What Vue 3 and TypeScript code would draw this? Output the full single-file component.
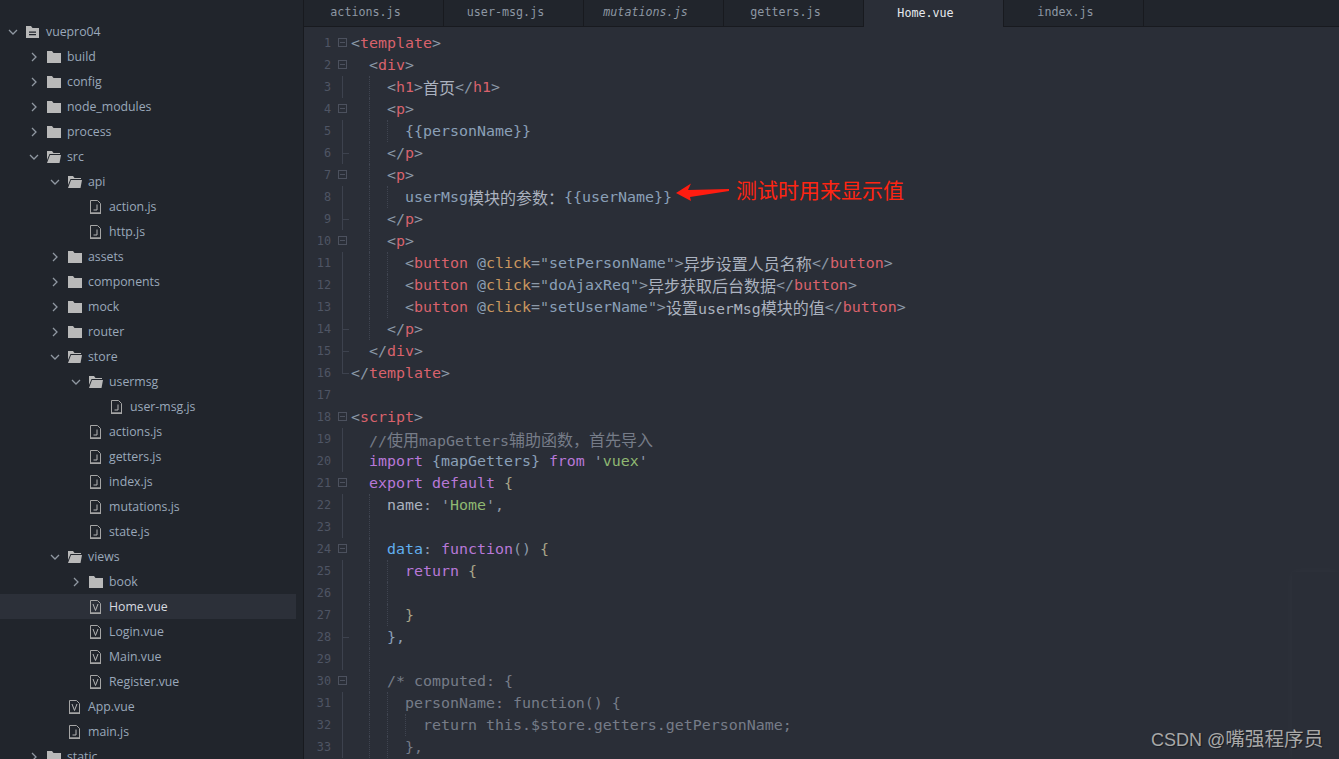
<script setup lang="ts">
type Tok = [string, string]
interface Line { indent: number; fold: string; toks: Tok[] }
interface Node { name: string; depth: number; kind: 'root' | 'closed' | 'open' | 'js' | 'vue'; active?: boolean }

const tabs = [
  { name: 'actions.js' },
  { name: 'user-msg.js' },
  { name: 'mutations.js', italic: true },
  { name: 'getters.js' },
  { name: 'Home.vue', active: true },
  { name: 'index.js' },
]

const tree: Node[] = [
  { name: 'vuepro04', depth: 0, kind: 'root' },
  { name: 'build', depth: 1, kind: 'closed' },
  { name: 'config', depth: 1, kind: 'closed' },
  { name: 'node_modules', depth: 1, kind: 'closed' },
  { name: 'process', depth: 1, kind: 'closed' },
  { name: 'src', depth: 1, kind: 'open' },
  { name: 'api', depth: 2, kind: 'open' },
  { name: 'action.js', depth: 3, kind: 'js' },
  { name: 'http.js', depth: 3, kind: 'js' },
  { name: 'assets', depth: 2, kind: 'closed' },
  { name: 'components', depth: 2, kind: 'closed' },
  { name: 'mock', depth: 2, kind: 'closed' },
  { name: 'router', depth: 2, kind: 'closed' },
  { name: 'store', depth: 2, kind: 'open' },
  { name: 'usermsg', depth: 3, kind: 'open' },
  { name: 'user-msg.js', depth: 4, kind: 'js' },
  { name: 'actions.js', depth: 3, kind: 'js' },
  { name: 'getters.js', depth: 3, kind: 'js' },
  { name: 'index.js', depth: 3, kind: 'js' },
  { name: 'mutations.js', depth: 3, kind: 'js' },
  { name: 'state.js', depth: 3, kind: 'js' },
  { name: 'views', depth: 2, kind: 'open' },
  { name: 'book', depth: 3, kind: 'closed' },
  { name: 'Home.vue', depth: 3, kind: 'vue', active: true },
  { name: 'Login.vue', depth: 3, kind: 'vue' },
  { name: 'Main.vue', depth: 3, kind: 'vue' },
  { name: 'Register.vue', depth: 3, kind: 'vue' },
  { name: 'App.vue', depth: 2, kind: 'vue' },
  { name: 'main.js', depth: 2, kind: 'js' },
  { name: 'static', depth: 1, kind: 'closed' },
]

const btn = (fn: string, label: Tok[]): Tok[] => [
  ['p', '<'], ['t', 'button'], ['x', ' @'], ['a', 'click'], ['p', '="'], ['x', fn], ['p', '">'],
  ...label,
  ['p', '</'], ['t', 'button'], ['p', '>'],
]

const lines: Line[] = [
  { indent: 0, fold: 'box', toks: [['p', '<'], ['t', 'template'], ['p', '>']] },
  { indent: 1, fold: 'box', toks: [['p', '<'], ['t', 'div'], ['p', '>']] },
  { indent: 2, fold: 'bar', toks: [['p', '<'], ['t', 'h1'], ['p', '>'], ['w', '首页'], ['p', '</'], ['t', 'h1'], ['p', '>']] },
  { indent: 2, fold: 'box', toks: [['p', '<'], ['t', 'p'], ['p', '>']] },
  { indent: 3, fold: 'bar', toks: [['x', '{{personName}}']] },
  { indent: 2, fold: 'tee', toks: [['p', '</'], ['t', 'p'], ['p', '>']] },
  { indent: 2, fold: 'box', toks: [['p', '<'], ['t', 'p'], ['p', '>']] },
  { indent: 3, fold: 'bar', toks: [['x', 'userMsg'], ['w', '模块的参数：'], ['x', '{{userName}}']] },
  { indent: 2, fold: 'tee', toks: [['p', '</'], ['t', 'p'], ['p', '>']] },
  { indent: 2, fold: 'box', toks: [['p', '<'], ['t', 'p'], ['p', '>']] },
  { indent: 3, fold: 'bar', toks: btn('setPersonName', [['w', '异步设置人员名称']]) },
  { indent: 3, fold: 'bar', toks: btn('doAjaxReq', [['w', '异步获取后台数据']]) },
  { indent: 3, fold: 'bar', toks: btn('setUserName', [['w', '设置userMsg模块的值']]) },
  { indent: 2, fold: 'tee', toks: [['p', '</'], ['t', 'p'], ['p', '>']] },
  { indent: 1, fold: 'tee', toks: [['p', '</'], ['t', 'div'], ['p', '>']] },
  { indent: 0, fold: 'end', toks: [['p', '</'], ['t', 'template'], ['p', '>']] },
  { indent: 0, fold: '', toks: [] },
  { indent: 0, fold: 'box', toks: [['p', '<'], ['t', 'script'], ['p', '>']] },
  { indent: 1, fold: 'bar', toks: [['m', '//使用mapGetters辅助函数，首先导入']] },
  { indent: 1, fold: 'bar', toks: [['k', 'import'], ['x', ' {mapGetters} '], ['k', 'from'], ['x', ' '], ['p', "'"], ['s', 'vuex'], ['p', "'"]] },
  { indent: 1, fold: 'box', toks: [['k', 'export default'], ['x', ' '], ['y', '{']] },
  { indent: 2, fold: 'bar', toks: [['w', 'name'], ['p', ': '], ['p', "'"], ['s', 'Home'], ['p', "',"]] },
  { indent: 2, fold: 'bar', toks: [] },
  { indent: 2, fold: 'box', toks: [['f', 'data'], ['p', ': '], ['k', 'function'], ['p', '() '], ['y', '{']] },
  { indent: 3, fold: 'bar', toks: [['k', 'return'], ['x', ' '], ['y', '{']] },
  { indent: 3, fold: 'bar', toks: [] },
  { indent: 3, fold: 'bar', toks: [['y', '}']] },
  { indent: 2, fold: 'tee', toks: [['x', '},']] },
  { indent: 2, fold: 'bar', toks: [] },
  { indent: 2, fold: 'box', toks: [['m', '/* computed: {']] },
  { indent: 3, fold: 'bar', toks: [['m', 'personName: function() {']] },
  { indent: 4, fold: 'bar', toks: [['m', 'return this.$store.getters.getPersonName;']] },
  { indent: 3, fold: 'bar', toks: [['m', '},']] },
]

const CJK = /([\u4e00-\u9fff\uff0c\uff1a]+)/
const parts = (text: string) =>
  text.split(CJK).filter(Boolean).map((s) => ({ s, cjk: CJK.test(s) }))
</script>

<template>
  <div class="app">
    <aside class="side">
      <div
        v-for="n in tree"
        :key="n.name + n.depth"
        class="row"
        :class="{ active: n.active }"
        :style="{ paddingLeft: 6 + n.depth * 21 + 'px' }"
      >
        <span class="chev">
          <svg v-if="n.kind === 'closed'" width="10" height="10" viewBox="0 0 10 10"><path d="M3 1l4 4-4 4" /></svg>
          <svg v-else-if="n.kind === 'open' || n.kind === 'root'" width="10" height="10" viewBox="0 0 10 10"><path d="M1 3l4 4 4-4" /></svg>
        </span>
        <span class="ico" :class="{ fileico: n.kind === 'js' || n.kind === 'vue' }">
          <svg v-if="n.kind === 'root'" width="14" height="12" viewBox="0 0 14 12">
            <path class="fill" d="M0 0h5l1.500 2H13v10H0z" />
            <path class="cut" d="M3 5.500h7v1.200H3zM3 8h7v1.200H3z" />
          </svg>
          <svg v-else-if="n.kind === 'closed'" width="14" height="12" viewBox="0 0 14 12">
            <path class="fill" d="M0 0h5l1.500 2H14v10H0z" />
          </svg>
          <svg v-else-if="n.kind === 'open'" width="14" height="12" viewBox="0 0 14 12">
            <path class="fill" d="M0 0h5l1.500 2H13v1H2.500L0 9zM3 4h11l-1.500 8H0z" />
          </svg>
          <svg v-else width="11" height="14" viewBox="0 0 11 14">
            <path class="outline" d="M.5.500h7l3 3v9.500h-10z" />
            <path class="base" d="M0 12.500h11V14H0z" />
            <path v-if="n.kind === 'js'" class="glyph" d="M7 4.500v5.500H3.500" />
            <path v-else class="glyph" d="M3 4l2.500 6.500L8 4" />
          </svg>
        </span>
        <span class="label">{{ n.name }}</span>
      </div>
    </aside>

    <main class="main">
      <nav class="tabs">
        <div v-for="t in tabs" :key="t.name" class="tab" :class="{ on: t.active, ital: t.italic }">{{ t.name }}</div>
      </nav>
      <div class="code">
        <div v-for="(l, i) in lines" :key="i" class="line">
          <span class="num">{{ i + 1 }}</span>
          <span class="fold" :class="l.fold"><i v-if="l.fold === 'box'"></i></span>
          <span class="src">
            <span v-for="lv in l.indent" :key="lv" class="ind" :class="{ guide: lv > 1 }"></span>
            <span v-for="(tk, j) in l.toks" :key="j" :class="tk[0]"><template v-for="(p, k) in parts(tk[1])" :key="k"><span v-if="p.cjk" class="cjk">{{ p.s }}</span><template v-else>{{ p.s }}</template></template></span>
          </span>
        </div>
      </div>
    </main>

    <svg class="arrow" width="60" height="22" viewBox="0 0 60 22">
      <path d="M1 13L16 3.500L13 10L54 9V11L15 17L16 21z" />
    </svg>
    <div class="note">测试时用来显示值</div>
    <div class="ghost"></div>
    <div class="mark">CSDN @<span class="markcjk">嘴强程序员</span></div>
  </div>
</template>

<style>
html, body { margin: 0; background: #21252b; overflow: hidden; }
</style>

<style scoped>
.app {
  position: relative;
  display: flex;
  width: 1339px;
  height: 759px;
  overflow: hidden;
  background: #2a2e37;
}
.side {
  flex: none;
  box-sizing: border-box;
  width: 304px;
  height: 759px;
  padding: 19px 7px 0 0;
  overflow: hidden;
  background: #21252c;
  border-right: 1px solid #181a1f;
  font: 12.3px "Open Sans", sans-serif;
  color: #9aa8ba;
}
.row {
  display: flex;
  align-items: center;
  height: 25px;
  white-space: nowrap;
}
.row.active { background: #2c3039; color: #d7dae0; }
.chev {
  flex: none;
  display: flex;
  justify-content: center;
  width: 14px;
}
.chev path { fill: none; stroke: #9098a2; stroke-width: 1.3; }
.ico {
  flex: none;
  display: flex;
  width: 20px;
  padding-left: 6px;
}
.ico.fileico { padding-left: 7px; width: 19px; }
.fill { fill: #b9b9b9; }
.cut { fill: #21252c; }
.outline { fill: none; stroke: #a5a5a5; }
.base { fill: #a5a5a5; }
.glyph { fill: none; stroke: #b5b5b5; }
.label { line-height: 25px; }

.main { flex: 1; min-width: 0; display: flex; flex-direction: column; }
.tabs {
  flex: none;
  display: flex;
  height: 27px;
  box-sizing: border-box;
  background: #21252c;
  border-bottom: 1px solid #181a1f;
}
.tab {
  box-sizing: border-box;
  width: 140px;
  height: 26px;
  padding-right: 16px;
  text-align: center;
  border-right: 1px solid #181a1f;
  font: 11.7px/24px "DejaVu Sans Mono", monospace;
  color: #8d97a3;
}
.tab.ital { font-style: italic; }
.tab.on {
  height: 27px;
  background: #2a2e37;
  color: #e6e9ee;
  line-height: 26px;
}
.code { padding-top: 5px; }
.line {
  display: flex;
  height: 22px;
  font: 14.95px/22px "DejaVu Sans Mono", monospace;
  color: #8ba0b8;
  white-space: pre;
}
.num {
  flex: none;
  width: 27px;
  text-align: right;
  font-size: 11.8px;
  color: #4f5564;
}
.fold {
  flex: none;
  position: relative;
  width: 20px;
}
.bar::before, .tee::before, .end::before {
  content: "";
  position: absolute;
  left: 11px;
  top: 0;
  bottom: 0;
  width: 1px;
  background: #3d424e;
}
.end::before { bottom: 11px; }
.tee::after, .end::after {
  content: "";
  position: absolute;
  left: 11px;
  top: 11px;
  width: 7px;
  height: 1px;
  background: #3d424e;
}
.fold i {
  position: absolute;
  left: 7px;
  top: 6px;
  box-sizing: border-box;
  width: 9px;
  height: 9px;
  border: 1px solid #4c515e;
}
.fold i::after {
  content: "";
  position: absolute;
  left: 1px;
  top: 3px;
  width: 5px;
  height: 1px;
  background: #4c515e;
}
.src { display: flex; align-items: stretch; }
.ind {
  display: inline-block;
  box-sizing: border-box;
  width: 18px;
  height: 22px;
}
.ind.guide { border-left: 1px dotted #3f4450; }
.cjk { font: 16px/22px "Noto Sans CJK SC", sans-serif; }
.p { color: #8c99a8; }
.t { color: #d9626c; }
.x { color: #8ba0b8; }
.a { color: #c9965f; }
.w { color: #abb2bf; }
.k { color: #b878d8; }
.s { color: #8fb872; }
.f { color: #61afef; }
.y { color: #a8a488; }
.m { color: #767c88; }

.arrow { position: absolute; left: 675px; top: 180px; }
.arrow path { fill: #ff1c10; }
.note {
  position: absolute;
  left: 736px;
  top: 175px;
  font: 21px/28px "Noto Sans CJK SC", sans-serif;
  color: #ff2512;
}
.ghost {
  position: absolute;
  left: 1292px;
  top: 572px;
  right: 0;
  bottom: 0;
  background: #2a2e37;
  box-shadow: 0 0 10px rgba(255, 255, 255, 0.03);
}
.mark {
  position: absolute;
  left: 1151px;
  top: 726px;
  font: 18px/26px "Liberation Sans", "Noto Sans CJK SC", sans-serif;
  color: #a8a8a8;
  text-shadow: 1px 1px 1px rgba(0, 0, 0, 0.4);
  white-space: nowrap;
}
.markcjk { font-size: 19.6px; }
</style>
